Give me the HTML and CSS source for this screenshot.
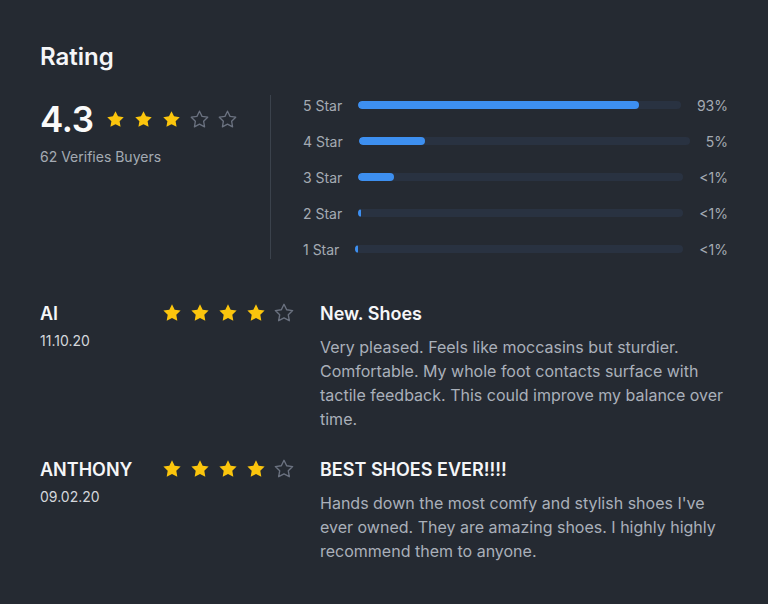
FILE: index.html
```html
<!DOCTYPE html>
<html>
<head>
<meta charset="utf-8">
<link rel="stylesheet" href="styles.css">
</head>
<body>
<svg width="0" height="0" class="defs">
  <defs>
    <path id="star" d="M12 2.5l2.9 5.9 6.5.95-4.7 4.58 1.1 6.47L12 17.35l-5.8 3.05 1.1-6.47L2.6 9.35l6.5-.95z"/>
  </defs>
</svg>
<main class="page">
  <h1 class="title">Rating</h1>
  <section class="summary">
    <div class="overall">
      <div class="score-row">
        <span class="score">4.3</span>
        <div class="stars">
          <svg class="star on" viewBox="0 0 24 24"><use href="#star"/></svg>
          <svg class="star on" viewBox="0 0 24 24"><use href="#star"/></svg>
          <svg class="star on" viewBox="0 0 24 24"><use href="#star"/></svg>
          <svg class="star off" viewBox="0 0 24 24"><use href="#star"/></svg>
          <svg class="star off" viewBox="0 0 24 24"><use href="#star"/></svg>
        </div>
      </div>
      <div class="buyers">62 Verifies Buyers</div>
    </div>
    <div class="bars">
      <div class="bar-row"><span class="label">5 Star</span><div class="track"><div class="fill" style="width:87%"></div></div><span class="pct">93%</span></div>
      <div class="bar-row"><span class="label">4 Star</span><div class="track"><div class="fill" style="width:20%"></div></div><span class="pct">5%</span></div>
      <div class="bar-row"><span class="label">3 Star</span><div class="track"><div class="fill" style="width:11%"></div></div><span class="pct">&lt;1%</span></div>
      <div class="bar-row"><span class="label">2 Star</span><div class="track"><div class="fill" style="width:0.7%"></div></div><span class="pct">&lt;1%</span></div>
      <div class="bar-row"><span class="label">1 Star</span><div class="track"><div class="fill" style="width:0.7%"></div></div><span class="pct">&lt;1%</span></div>
    </div>
  </section>
  <section class="reviews">
    <article class="review">
      <div class="who">
        <div class="name">AI</div>
        <div class="date">11.10.20</div>
      </div>
      <div class="stars small">
        <svg class="star on" viewBox="0 0 24 24"><use href="#star"/></svg>
        <svg class="star on" viewBox="0 0 24 24"><use href="#star"/></svg>
        <svg class="star on" viewBox="0 0 24 24"><use href="#star"/></svg>
        <svg class="star on" viewBox="0 0 24 24"><use href="#star"/></svg>
        <svg class="star off" viewBox="0 0 24 24"><use href="#star"/></svg>
      </div>
      <div class="content">
        <h2 class="r-title">New. Shoes</h2>
        <p class="r-body">Very pleased. Feels like moccasins but sturdier. Comfortable. My whole foot contacts surface with tactile feedback. This could improve my balance over time.</p>
      </div>
    </article>
    <article class="review">
      <div class="who">
        <div class="name">ANTHONY</div>
        <div class="date">09.02.20</div>
      </div>
      <div class="stars small">
        <svg class="star on" viewBox="0 0 24 24"><use href="#star"/></svg>
        <svg class="star on" viewBox="0 0 24 24"><use href="#star"/></svg>
        <svg class="star on" viewBox="0 0 24 24"><use href="#star"/></svg>
        <svg class="star on" viewBox="0 0 24 24"><use href="#star"/></svg>
        <svg class="star off" viewBox="0 0 24 24"><use href="#star"/></svg>
      </div>
      <div class="content">
        <h2 class="r-title">BEST SHOES EVER!!!!</h2>
        <p class="r-body">Hands down the most comfy and stylish shoes I've ever owned. They are amazing shoes. I highly highly recommend them to anyone.</p>
      </div>
    </article>
  </section>
</main>
</body>
</html>
```

FILE: styles.css
```css
* { box-sizing: border-box; }
html, body { margin: 0; padding: 0; }
body {
  background: #252a32;
  font-family: Inter, "Noto Sans", sans-serif;
  color: #f3f4f6;
  width: 768px;
  height: 604px;
  overflow: hidden;
}
.defs { position: absolute; }
.page { padding: 41px 40px 0 40px; }
.title {
  margin: 0;
  font-size: 24px;
  line-height: 32px;
  font-weight: 600;
  color: #f5f6f8;
}
.summary {
  display: flex;
  margin-top: 22px;
}
.overall {
  width: 231px;
  border-right: 1px solid #3b424c;
  height: 164px;
}
.score-row {
  display: flex;
  align-items: center;
  gap: 11px;
  margin-top: 2px;
}
.score {
  font-size: 35px;
  line-height: 44px;
  font-weight: 600;
  color: #fafafa;
  letter-spacing: -0.3px;
}
.stars { display: flex; gap: 7px; }
.star { width: 21px; height: 21px; display: block; }
.star.on { fill: #fbc50d; }
.star.off { fill: none; stroke: #6b7280; stroke-width: 1.5; stroke-linejoin: round; }
.buyers {
  margin-top: 6px;
  font-size: 14px;
  line-height: 20px;
  color: #a4aab3;
}
.bars {
  flex: 1;
  padding-left: 32px;
  display: flex;
  flex-direction: column;
  gap: 16px;
}
.bar-row {
  display: flex;
  align-items: center;
  height: 20px;
  gap: 16px;
  font-size: 14px;
  color: #a4aab3;
}
.track {
  flex: 1;
  height: 8px;
  border-radius: 4px;
  background: #293241;
  overflow: hidden;
}
.fill {
  height: 100%;
  border-radius: 4px;
  background: #3d8ff0;
}
.pct { text-align: right; }
.reviews {
  margin-top: 43px;
  display: flex;
  flex-direction: column;
  gap: 27px;
}
.review {
  display: grid;
  grid-template-columns: 123px 157px 1fr;
}
.name {
  font-size: 18px;
  line-height: 24px;
  font-weight: 600;
  color: #f5f6f8;
}
.date {
  margin-top: 5px;
  font-size: 14px;
  line-height: 20px;
  color: #d4d7dc;
}
.stars.small { gap: 6px; }
.stars.small .star { width: 22px; height: 22px; margin-left: -2px; }
.stars.small .star + .star { margin-left: 0; }
.r-title {
  margin: 0;
  font-size: 18px;
  line-height: 24px;
  font-weight: 600;
  color: #f5f6f8;
}
.r-body {
  margin: 9px 0 0 0;
  font-size: 16px;
  line-height: 24px;
  color: #aab0ba;
}
```
